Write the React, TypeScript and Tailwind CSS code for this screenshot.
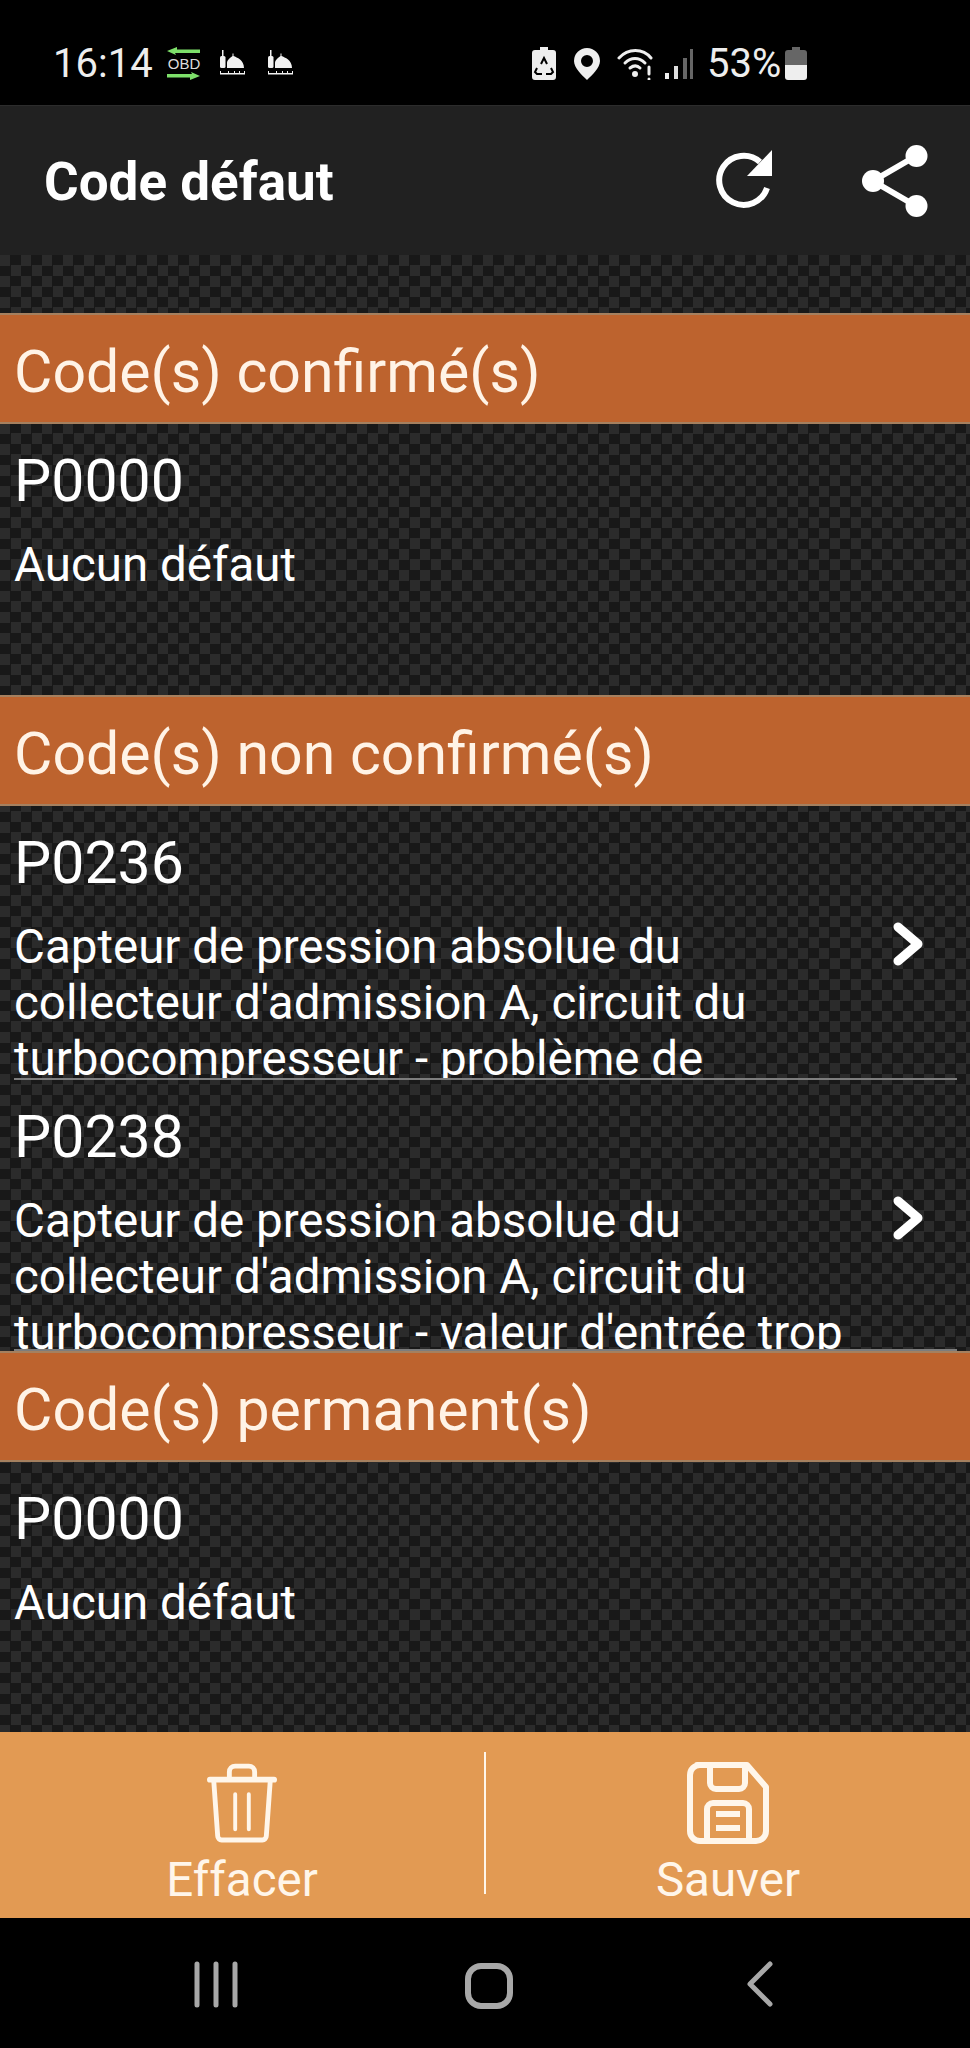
import React from 'react'

const carbon = 'bg-[#1f1f1f] bg-[conic-gradient(#181818_25%,#2b2b2b_0_50%,#181818_0_75%,#2b2b2b_0)] bg-[length:21px_21px]'

function Mosque() {
  return (
    <svg width="26" height="26" viewBox="0 0 26 26" fill="#f2f2f2">
      <rect x="3" y="0" width="1.500" height="6" />
      <rect x="1" y="6" width="5.500" height="12" rx="1.500" />
      <path d="M8 18v-5c0-3 3-5 5.500-7V3.500h1V6C18 7.500 25 10 25 18z" />
      <path d="M1 21h1v2h7v-2h1v2h5v-2h1v2h4v-2h1v2h4v-2h1v3.500H1z" />
    </svg>
  )
}

function StatusBar() {
  return (
    <div className="h-[105px] bg-black flex items-center pt-[22px] pl-[53px] text-[#eee] font-['Roboto',sans-serif]">
      <span className="text-[40px] leading-none w-[98px]">16:14</span>
      <div className="ml-[16px] w-[34px] flex flex-col items-center">
        <svg width="34" height="8" viewBox="0 0 34 8" fill="#7ee06a"><path d="M0 4 10 0v2.500h23V6H8l1 2z" /></svg>
        <span className="text-[15px] leading-[17px] text-[#ddd] font-['Liberation_Sans',sans-serif]">OBD</span>
        <svg width="34" height="8" viewBox="0 0 34 8" fill="#7ee06a"><path d="M33 4 23 8V5.500H0V2h25l-1-2z" /></svg>
      </div>
      <div className="ml-[18px] -mt-[2px]"><Mosque /></div>
      <div className="ml-[22px] -mt-[2px]"><Mosque /></div>
      <div className="ml-[239px] flex items-center">
        <svg width="24" height="33" viewBox="0 0 24 33">
          <path d="M8 0h8v3h5a3 3 0 0 1 3 3v24a3 3 0 0 1-3 3H3a3 3 0 0 1-3-3V6a3 3 0 0 1 3-3h5z" fill="#eee" />
          <path d="M9 17l3-6 3 6M5 21l-2 4 2 2h5M19 21l2 4-2 2h-5" stroke="#000" strokeWidth="2" fill="none" />
        </svg>
        <svg className="ml-[18px]" width="26" height="32" viewBox="0 0 26 32" fill="#eee">
          <path fillRule="evenodd" d="M13 0a13 13 0 0 1 13 13c0 7-8 14-13 19C8 27 0 20 0 13A13 13 0 0 1 13 0zm0 7a6 6 0 1 0 0 12 6 6 0 0 0 0-12z" />
        </svg>
        <svg className="ml-[17px]" width="37" height="32" viewBox="0 0 37 32" fill="none" stroke="#eee" strokeWidth="3" strokeLinecap="round">
          <path d="M2 10C11 0 26 0 34 10" />
          <path d="M8 15c6-6 14-6 20 0" />
          <path d="M13 20c4-3 7-3 10 0" />
          <circle cx="18" cy="26" r="1.500" fill="#eee" />
          <path d="M32 19v7M32 31v0" />
        </svg>
        <svg className="ml-[10px]" width="30" height="32" viewBox="0 0 30 32">
          <rect x="1" y="25" width="4" height="6" fill="#eee" />
          <rect x="10" y="18" width="4" height="13" fill="#ddd" />
          <rect x="19" y="10" width="4" height="21" fill="#666" />
          <rect x="26" y="1" width="3" height="30" fill="#666" />
        </svg>
        <span className="ml-[13px] text-[40px] leading-none w-[78px]">53%</span>
        <svg width="22" height="33" viewBox="0 0 22 33">
          <path d="M7 0h8v3h4a3 3 0 0 1 3 3v12H0V6a3 3 0 0 1 3-3h4z" fill="#666" />
          <path d="M0 18h22v12a3 3 0 0 1-3 3H3a3 3 0 0 1-3-3z" fill="#eee" />
        </svg>
      </div>
    </div>
  )
}

function AppBar() {
  return (
    <div className="h-[150px] bg-[#212121] border-t border-[#2c2c2c] flex items-center justify-between pl-[44px] pr-[42px] font-['Roboto',sans-serif]">
      <span className="text-[53px] font-bold text-white leading-none mt-[3px]">Code défaut</span>
      <div className="flex items-center gap-[89px]">
        <svg width="58" height="60" viewBox="0 0 58 60" fill="none" className="-mt-[2px] -ml-[1px] mr-[1px]">
          <path d="M53 38a24.500 24.500 0 1 1-7-26" stroke="#fff" strokeWidth="6" />
          <path d="M58 0v26H33z" fill="#fff" />
        </svg>
        <svg width="66" height="72" viewBox="0 0 66 72" fill="none">
          <path d="M54 11 11 36l43 25" stroke="#fff" strokeWidth="6" />
          <circle cx="54.500" cy="11" r="11" fill="#fff" />
          <circle cx="11" cy="36" r="11" fill="#fff" />
          <circle cx="54.500" cy="61" r="11" fill="#fff" />
        </svg>
      </div>
    </div>
  )
}

function SectionHeader({ title }: { title: string }) {
  return (
    <div className="h-[111px] bg-[#bd632e] border-y-2 border-[#a5805f] flex items-center pl-[14px] text-[59px] text-[#fff3e6] leading-none">
      <span className="mt-[5px]">{title}</span>
    </div>
  )
}

function EmptyCode({ height }: { height: string }) {
  return (
    <div className={height}>
      <div className="pl-[14px] pt-[27px] text-[59px] leading-[60px] text-white">P0000</div>
      <div className="pl-[14px] pt-[26px] text-[47.500px] leading-[56px] text-white">Aucun défaut</div>
    </div>
  )
}

function CodeRow({ code, lines, height }: { code: string; lines: string[]; height: string }) {
  return (
    <div className={`relative overflow-hidden ${height}`}>
      <div className="pl-[14px] pt-[27px] text-[59px] leading-[60px] text-white">{code}</div>
      <div className="pl-[14px] pt-[26px] text-[47.500px] leading-[56px] text-white">
        {lines.map(line => (
          <div key={line} className="whitespace-nowrap">{line}</div>
        ))}
      </div>
      {/* chevron */}
      <svg className="absolute left-[893px] top-[116px]" width="30" height="44" viewBox="0 0 30 44" fill="none">
        <path d="M5 5l20 17L5 39" stroke="#fff" strokeWidth="9" strokeLinecap="round" strokeLinejoin="round" />
      </svg>
      <div className="absolute bottom-0 left-[14px] right-[13px] h-[2px] bg-[#7d7d7d]" />
    </div>
  )
}

function BottomBar() {
  return (
    <div className="h-[186px] bg-[#e29a53] flex items-center font-['Roboto',sans-serif] text-[#fff6ea]">
      <div className="flex-1 flex flex-col items-center pt-[18px]">
        <svg width="70" height="82" viewBox="0 0 72 82" fill="none" stroke="#fff6ea" strokeWidth="5" strokeLinejoin="round" strokeLinecap="round">
          <path d="M3 17h66" strokeWidth="6" />
          <path d="M23 15V9a6 6 0 0 1 6-6h14a6 6 0 0 1 6 6v6" />
          <path d="M7 19l4 56a4 4 0 0 0 4 4h42a4 4 0 0 0 4-4l4-56" />
          <path d="M29 32v36M43 32v36" strokeWidth="4" />
        </svg>
        <span className="text-[47.500px] leading-[52px] mt-[10px]">Effacer</span>
      </div>
      <div className="w-[2px] h-[142px] bg-[#fff6ea] -mt-[4px]" />
      <div className="flex-1 flex flex-col items-center pt-[18px]">
        <svg width="82" height="82" viewBox="0 0 82 82" fill="none" stroke="#fff6ea" strokeWidth="6" strokeLinejoin="round">
          <path d="M10 3h50l19 22v44a10 10 0 0 1-10 10H13A10 10 0 0 1 3 69V13A10 10 0 0 1 13 3z" />
          <path d="M23 3v18a6 6 0 0 0 6 6h23a6 6 0 0 0 6-6V3" />
          <path d="M20 79V47a6 6 0 0 1 6-6h30a6 6 0 0 1 6 6v32" />
          <path d="M29 52h24M29 66h24" />
        </svg>
        <span className="text-[47.500px] leading-[52px] mt-[10px]">Sauver</span>
      </div>
    </div>
  )
}

function NavBar() {
  return (
    <div className="h-[130px] bg-black relative">
      <svg className="absolute left-[194px] top-[43px]" width="44" height="50" viewBox="0 0 44 50" stroke="#a8a8a8" strokeWidth="5" strokeLinecap="round">
        <path d="M3 3v41M22 3v41M41 3v41" />
      </svg>
      <svg className="absolute left-[465px] top-[45px]" width="48" height="46" viewBox="0 0 48 46" fill="none" stroke="#a8a8a8" strokeWidth="6">
        <rect x="3" y="3" width="42" height="40" rx="13" />
      </svg>
      <svg className="absolute left-[745px] top-[43px]" width="30" height="46" viewBox="0 0 30 46" fill="none" stroke="#a8a8a8" strokeWidth="5" strokeLinecap="round" strokeLinejoin="round">
        <path d="M25 3 5 23l20 20" />
      </svg>
    </div>
  )
}

export default function App() {
  return (
    <div className="w-[970px] h-[2048px] flex flex-col bg-black overflow-hidden font-['Roboto',sans-serif]">
      <StatusBar />
      <AppBar />
      <div className={`flex-1 flex flex-col pt-[58px] ${carbon}`}>
        <SectionHeader title="Code(s) confirmé(s)" />
        <EmptyCode height="h-[271px]" />
        <SectionHeader title="Code(s) non confirmé(s)" />
        <CodeRow height="h-[274px]" code="P0236" lines={['Capteur de pression absolue du', "collecteur d'admission A, circuit du", 'turbocompresseur - problème de']} />
        <CodeRow height="h-[271px]" code="P0238" lines={['Capteur de pression absolue du', "collecteur d'admission A, circuit du", "turbocompresseur - valeur d'entrée trop"]} />
        <SectionHeader title="Code(s) permanent(s)" />
        <EmptyCode height="h-[269px]" />
      </div>
      <BottomBar />
      <NavBar />
    </div>
  )
}
